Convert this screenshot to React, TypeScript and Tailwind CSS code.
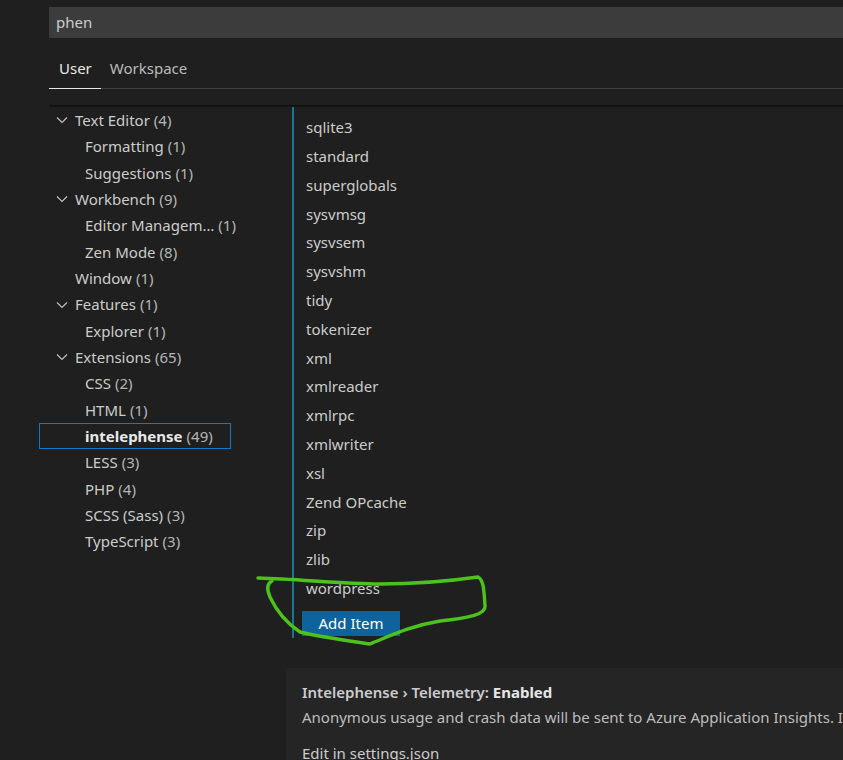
import React from 'react';

const font = { fontFamily: '"Noto Sans", "Open Sans", sans-serif' };

type Node = { label: string; count: number; level: 1 | 2; open?: boolean; selected?: boolean };

const tree: Node[] = [
  { label: 'Text Editor', count: 4, level: 1, open: true },
  { label: 'Formatting', count: 1, level: 2 },
  { label: 'Suggestions', count: 1, level: 2 },
  { label: 'Workbench', count: 9, level: 1, open: true },
  { label: 'Editor Managem…', count: 1, level: 2 },
  { label: 'Zen Mode', count: 8, level: 2 },
  { label: 'Window', count: 1, level: 1 },
  { label: 'Features', count: 1, level: 1, open: true },
  { label: 'Explorer', count: 1, level: 2 },
  { label: 'Extensions', count: 65, level: 1, open: true },
  { label: 'CSS', count: 2, level: 2 },
  { label: 'HTML', count: 1, level: 2 },
  { label: 'intelephense', count: 49, level: 2, selected: true },
  { label: 'LESS', count: 3, level: 2 },
  { label: 'PHP', count: 4, level: 2 },
  { label: 'SCSS (Sass)', count: 3, level: 2 },
  { label: 'TypeScript', count: 3, level: 2 },
];

const stubs = [
  'sqlite3', 'standard', 'superglobals', 'sysvmsg', 'sysvsem', 'sysvshm', 'tidy', 'tokenizer',
  'xml', 'xmlreader', 'xmlrpc', 'xmlwriter', 'xsl', 'Zend OPcache', 'zip', 'zlib', 'wordpress',
];

function Chevron() {
  return (
    <svg width="12" height="8" viewBox="0 0 12 8" className="shrink-0">
      <polyline points="1,1.5 6,6.5 11,1.5" fill="none" stroke="#c5c5c5" strokeWidth="1.1" />
    </svg>
  );
}

function TreeRow({ node }: { node: Node }) {
  return (
    <div
      className={`flex items-center h-[26.35px] border whitespace-nowrap ${
        node.selected ? 'border-[#0a7ad4]' : 'border-transparent'
      } ${node.level === 1 ? 'pl-[16px]' : 'pl-[45px]'}`}
    >
      {node.level === 1 && (
        <span className="w-[19px] flex items-center">{node.open && <Chevron />}</span>
      )}
      <span className={node.selected ? 'font-bold text-[#e8e8e8]' : 'text-[#cccccc]'}>{node.label}</span>
      <span className="ml-[4px] text-[#b5b5b5]">({node.count})</span>
    </div>
  );
}

export default function App() {
  return (
    <div className="relative w-[843px] h-[760px] overflow-hidden bg-[#1f1f1f] text-[15px] text-[#cccccc]" style={font}>
      {/* search */}
      <div className="ml-[49px] mt-[7px] h-[31px] bg-[#3c3c3c] pl-[7px] flex items-center text-[#cccccc]">phen</div>

      {/* tabs */}
      <div className="ml-[49px] h-[51px] flex items-end border-b border-[#404040]">
        <div className="h-full flex items-center pl-[10px] pr-[9px] pt-[10px] text-[#e7e7e7] border-b border-[#e7e7e7] -mb-px">User</div>
        <div className="h-full flex items-center pl-[9px] pt-[10px] text-[#bbbbbb]">Workspace</div>
      </div>

      {/* scroll shadow */}
      <div className="ml-[49px] mt-[16px] h-[3px] bg-gradient-to-b from-[#0d0d0d] to-[#1f1f1f]" />

      <div className="flex -mt-[1px]">
        {/* toc */}
        <div className="ml-[39px] w-[192px] shrink-0">
          {tree.map((n) => (
            <TreeRow key={n.label} node={n} />
          ))}
        </div>

        {/* settings */}
        <div className="ml-[55px] flex-1 flex flex-col">
          <div className="ml-[6px] border-l-2 border-[#197794] pt-[6px] pb-[2px] w-[120px]">
            {stubs.map((s) => (
              <div key={s} className="h-[28.8px] flex items-center pl-[12px] text-[#cccccc]">
                {s}
              </div>
            ))}
            <button className="ml-[8px] mt-[8px] h-[25px] w-[98px] bg-[#0e639c] text-white flex items-center justify-center">
              Add Item
            </button>
          </div>

          <div className="mt-[30px] bg-[#252526] pt-[13px] pl-[16px] whitespace-nowrap overflow-hidden h-[120px]">
            <div className="h-[24px] flex items-center font-semibold text-[#cccccc]">
              Intelephense › Telemetry:&nbsp;<span className="font-bold text-[#e7e7e7]">Enabled</span>
            </div>
            <div className="h-[25px] flex items-center text-[#bdbdbd]">
              Anonymous usage and crash data will be sent to Azure Application Insights. I
            </div>
            <div className="mt-[12px] h-[24px] flex items-center text-[#cccccc]">Edit in settings.json</div>
          </div>
        </div>
      </div>

      {/* hand-drawn highlight */}
      <svg className="absolute inset-0 pointer-events-none" width="843" height="760" viewBox="0 0 843 760">
        <path
          d="M258 578 C 300 579, 340 584, 380 584 C 420 584, 450 581, 478 577 C 484 580, 484 592, 485 606 C 486 614, 470 618, 440 621 C 410 626, 390 636, 370 644 C 350 641, 320 637, 300 632 C 285 622, 276 610, 270 597 C 266 588, 268 583, 272 581"
          fill="none"
          stroke="#4cc21c"
          strokeWidth="3.4"
          strokeLinecap="round"
          strokeLinejoin="round"
        />
      </svg>
    </div>
  );
}
